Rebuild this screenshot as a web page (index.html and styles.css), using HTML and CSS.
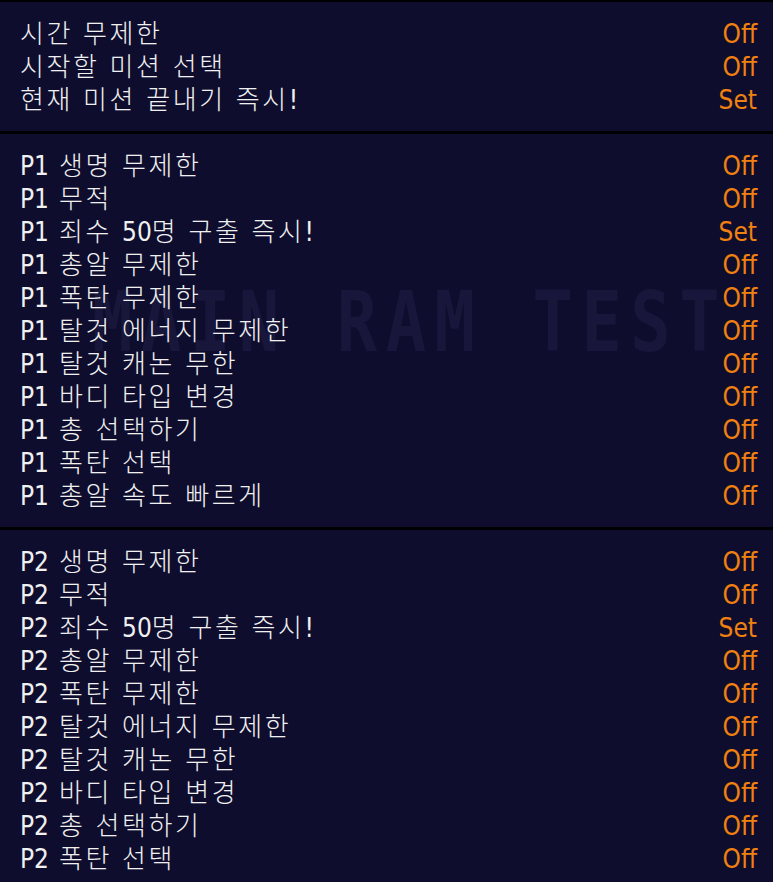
FILE: index.html
```html
<!DOCTYPE html>
<html lang="ko">
<head>
    <meta charset="UTF-8">
    <title>Cheat Menu</title>
    <link rel="stylesheet" href="styles.css">
</head>
<body>
    <div class="menu">
        <div class="watermark">MAIN RAM TEST</div>

        <div class="section">
            <div class="row"><span class="name">시간 무제한</span><span class="value">Off</span></div>
            <div class="row"><span class="name">시작할 미션 선택</span><span class="value">Off</span></div>
            <div class="row"><span class="name">현재 미션 끝내기 즉시!</span><span class="value">Set</span></div>
        </div>

        <div class="section">
            <div class="row"><span class="name"><b>P1</b> 생명 무제한</span><span class="value">Off</span></div>
            <div class="row"><span class="name"><b>P1</b> 무적</span><span class="value">Off</span></div>
            <div class="row"><span class="name"><b>P1</b> 죄수 <b>50</b>명 구출 즉시!</span><span class="value">Set</span></div>
            <div class="row"><span class="name"><b>P1</b> 총알 무제한</span><span class="value">Off</span></div>
            <div class="row"><span class="name"><b>P1</b> 폭탄 무제한</span><span class="value">Off</span></div>
            <div class="row"><span class="name"><b>P1</b> 탈것 에너지 무제한</span><span class="value">Off</span></div>
            <div class="row"><span class="name"><b>P1</b> 탈것 캐논 무한</span><span class="value">Off</span></div>
            <div class="row"><span class="name"><b>P1</b> 바디 타입 변경</span><span class="value">Off</span></div>
            <div class="row"><span class="name"><b>P1</b> 총 선택하기</span><span class="value">Off</span></div>
            <div class="row"><span class="name"><b>P1</b> 폭탄 선택</span><span class="value">Off</span></div>
            <div class="row"><span class="name"><b>P1</b> 총알 속도 빠르게</span><span class="value">Off</span></div>
        </div>

        <div class="section">
            <div class="row"><span class="name"><b>P2</b> 생명 무제한</span><span class="value">Off</span></div>
            <div class="row"><span class="name"><b>P2</b> 무적</span><span class="value">Off</span></div>
            <div class="row"><span class="name"><b>P2</b> 죄수 <b>50</b>명 구출 즉시!</span><span class="value">Set</span></div>
            <div class="row"><span class="name"><b>P2</b> 총알 무제한</span><span class="value">Off</span></div>
            <div class="row"><span class="name"><b>P2</b> 폭탄 무제한</span><span class="value">Off</span></div>
            <div class="row"><span class="name"><b>P2</b> 탈것 에너지 무제한</span><span class="value">Off</span></div>
            <div class="row"><span class="name"><b>P2</b> 탈것 캐논 무한</span><span class="value">Off</span></div>
            <div class="row"><span class="name"><b>P2</b> 바디 타입 변경</span><span class="value">Off</span></div>
            <div class="row"><span class="name"><b>P2</b> 총 선택하기</span><span class="value">Off</span></div>
            <div class="row"><span class="name"><b>P2</b> 폭탄 선택</span><span class="value">Off</span></div>
        </div>
    </div>
</body>
</html>
```

FILE: styles.css
```css
body {
    margin: 0;
    background-color: #0e0d2d;
    font-family: "DejaVu Sans Condensed", "DejaVu Sans", "Noto Sans CJK KR", sans-serif;
    font-size: 26px;
    color: #f0f0f0;
    overflow: hidden;
}

.menu {
    position: relative;
    border-top: 2px solid #000;
}

.section {
    padding: 16px 16px 14px 20px;
    border-bottom: 3px solid #000;
}

.section:last-child {
    border-bottom: none;
}

.row {
    display: flex;
    justify-content: space-between;
    align-items: center;
    height: 33px;
    line-height: 33px;
    position: relative;
}

.name {
    letter-spacing: 2.6px;
    font-weight: 300;
}

/* latin bits (player tag, numbers) sit tight, no extra spacing */
.name b {
    font-weight: normal;
    letter-spacing: 0;
}

.value {
    color: #f08010;
}

/* faint background text behind the list */
.watermark {
    position: absolute;
    left: 92px;
    top: 278px;
    font-family: "DejaVu Sans Mono", monospace;
    font-weight: bold;
    font-size: 84px;
    line-height: 1;
    letter-spacing: 10.6px;
    color: #18173b;
    white-space: pre;
    transform: scaleX(0.8);
    transform-origin: left top;
}
```
